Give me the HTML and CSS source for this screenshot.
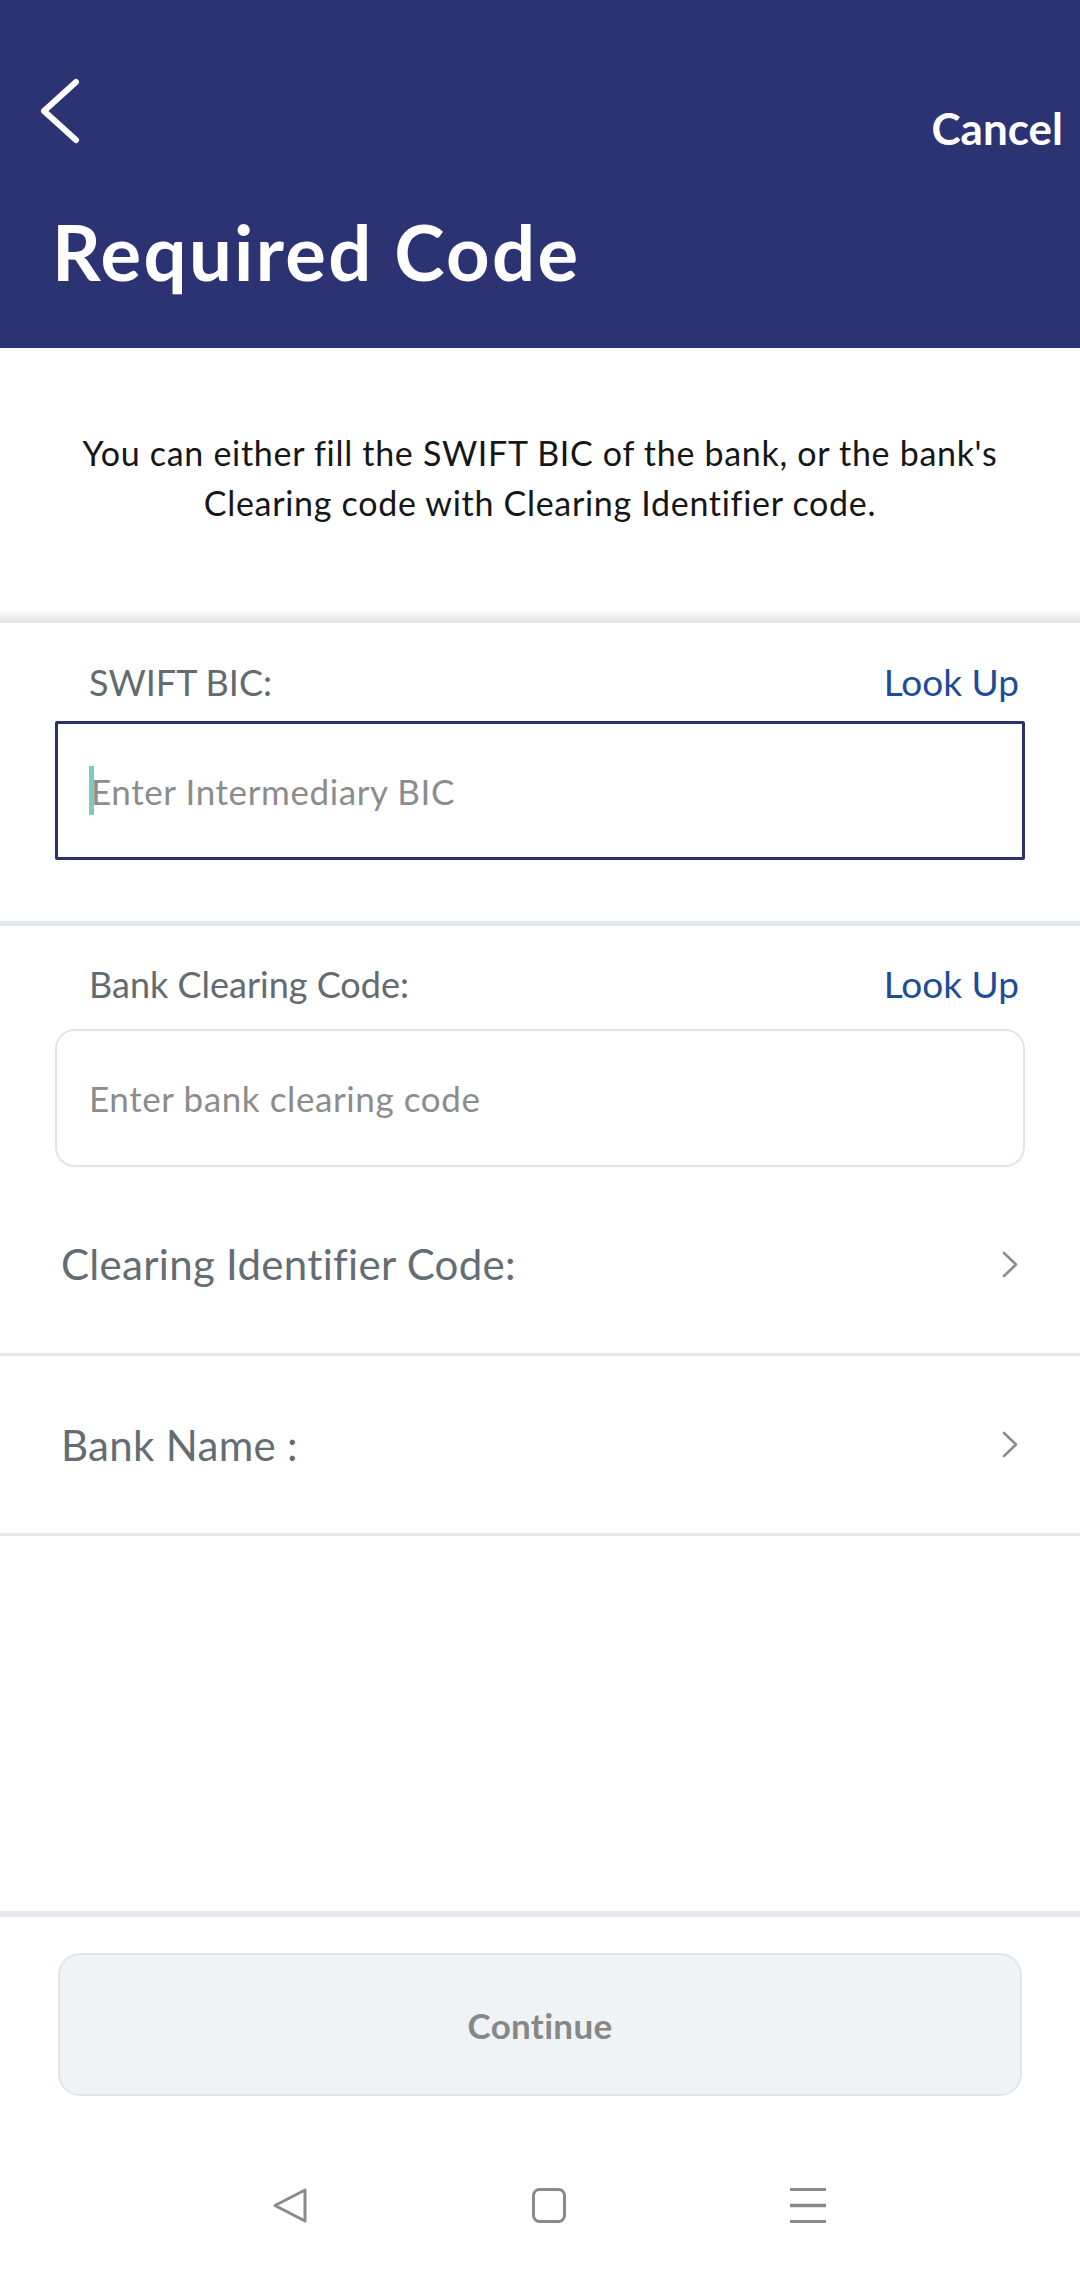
FILE: index.html
```html
<!DOCTYPE html>
<html lang="en">
<head>
<meta charset="utf-8">
<title>Required Code</title>
<link rel="stylesheet" href="styles.css">
</head>
<body>
<div class="screen">
  <header class="header">
    <div class="topbar">
      <svg class="back" viewBox="0 0 40 66" width="40" height="66"><polyline points="36,4 4,33 36,62" fill="none" stroke="#fff" stroke-width="6" stroke-linecap="round" stroke-linejoin="round"/></svg>
      <span class="cancel">Cancel</span>
    </div>
    <h1 class="title">Required Code</h1>
  </header>

  <section class="intro">
    <p>You can either fill the SWIFT BIC of the bank, or the bank's<br>Clearing code with Clearing Identifier code.</p>
  </section>
  <div class="shade"></div>

  <section class="field field-bic">
    <div class="field-head"><span class="label">SWIFT BIC:</span><span class="lookup">Look Up</span></div>
    <div class="input input-focus"><span class="caret"></span><span class="ph">Enter Intermediary BIC</span></div>
  </section>
  <div class="sep"></div>

  <section class="field field-clear">
    <div class="field-head"><span class="label">Bank Clearing Code:</span><span class="lookup">Look Up</span></div>
    <div class="input input-round"><span class="ph">Enter bank clearing code</span></div>
  </section>

  <div class="row row-first">
    <span class="row-text">Clearing Identifier Code:</span>
    <svg class="chev" viewBox="0 0 16 27" width="16" height="27"><polyline points="2,2 14,13.5 2,25" fill="none" stroke="#8d8d8d" stroke-width="2.6" stroke-linecap="round" stroke-linejoin="round"/></svg>
  </div>
  <div class="divider"></div>
  <div class="row">
    <span class="row-text">Bank Name :</span>
    <svg class="chev" viewBox="0 0 16 27" width="16" height="27"><polyline points="2,2 14,13.5 2,25" fill="none" stroke="#8d8d8d" stroke-width="2.6" stroke-linecap="round" stroke-linejoin="round"/></svg>
  </div>
  <div class="divider"></div>

  <div class="spacer"></div>

  <footer class="footer">
    <div class="footer-sep"></div>
    <div class="btn-wrap"><div class="btn">Continue</div></div>
    <nav class="sysnav">
      <svg viewBox="0 0 36 35" width="36" height="35"><polygon points="33,2 3,17.5 33,33" fill="none" stroke="#8a8a8a" stroke-width="3" stroke-linejoin="round"/></svg>
      <svg viewBox="0 0 34 35" width="34" height="35"><rect x="1.5" y="1.5" width="31" height="32" rx="6" fill="none" stroke="#8a8a8a" stroke-width="3"/></svg>
      <svg viewBox="0 0 36 35" width="36" height="35"><line x1="0" y1="1.5" x2="36" y2="1.5" stroke="#8a8a8a" stroke-width="3"/><line x1="0" y1="17.5" x2="36" y2="17.5" stroke="#8a8a8a" stroke-width="3.4"/><line x1="0" y1="33.5" x2="36" y2="33.5" stroke="#8a8a8a" stroke-width="3"/></svg>
    </nav>
  </footer>
</div>
</body>
</html>
```
FILE: styles.css
```css
* { box-sizing: border-box; }
html, body { margin: 0; padding: 0; background: #fff; }
body { font-family: Lato, "Open Sans", sans-serif; }

.screen {
  width: 1080px;
  height: 2274px;
  display: flex;
  flex-direction: column;
  overflow: hidden;
}

/* header */
.header {
  height: 348px;
  flex: none;
  background: #2b3373;
  color: #fff;
}
.topbar {
  display: flex;
  justify-content: space-between;
  align-items: flex-start;
  padding: 78px 17px 0 40px;
}
.back { display: block; }
.cancel {
  margin-top: 24px;
  font-size: 44px;
  line-height: 52px;
  font-weight: 700;
}
.title {
  margin: 53px 0 0;
  padding-left: 52px;
  font-size: 76px;
  line-height: 90px;
  font-weight: 700;
  letter-spacing: 2.3px;
}

/* intro */
.intro {
  flex: none;
  padding: 80px 10px 80px;
}
.intro p {
  margin: 0;
  text-align: center;
  font-size: 34px;
  line-height: 50px;
  letter-spacing: 0.7px;
  color: #161616;
}
.shade {
  flex: none;
  height: 15px;
  background: linear-gradient(to bottom, #ffffff, #e4e4e4);
}

/* fields */
.field { flex: none; }
.field-bic { padding: 37px 0 61px; }
.field-clear { padding: 36px 0 0; }
.field-head {
  height: 44px;
  display: flex;
  justify-content: space-between;
  align-items: baseline;
  padding: 0 61px 0 89px;
}
.label {
  font-size: 36px;
  line-height: 44px;
  color: #636b71;
}
.lookup {
  font-size: 37px;
  line-height: 44px;
  color: #1d4c9b;
}
.input {
  margin: 17px 55px 0;
  height: 139px;
  display: flex;
  align-items: center;
  padding-left: 31px;
}
.input-focus {
  border: 3px solid #2c3270;
  border-radius: 2px;
}
.field-clear .input { margin-top: 23px; height: 138px; padding-left: 32px; }
.input-round {
  border: 2px solid #e1e5eb;
  border-radius: 20px;
}
.caret {
  display: inline-block;
  width: 5px;
  height: 49px;
  margin-right: -3px;
  background: #7fcabd;
}
.ph {
  font-size: 35px;
  line-height: 42px;
  letter-spacing: 0.6px;
  color: #8c8c8c;
}
.sep {
  flex: none;
  height: 5px;
  background: #e3e8ee;
}

/* rows */
.row {
  flex: none;
  height: 177px;
  display: flex;
  align-items: center;
  justify-content: space-between;
  padding: 0 62px 0 61px;
}
.row-first { margin-top: 8px; height: 178px; }
.row-text {
  font-size: 42px;
  line-height: 50px;
  letter-spacing: 0.3px;
  color: #646d73;
}
.chev { display: block; }
.divider {
  flex: none;
  height: 3px;
  background: #e4e7ee;
}

.spacer { flex: 1; }

/* footer */
.footer { flex: none; }
.footer-sep { height: 6px; background: #e4e8ee; }
.btn-wrap { padding: 36px 58px 0; }
.btn {
  height: 143px;
  border: 2px solid #e1e5ea;
  border-radius: 22px;
  background: #f0f3f6;
  display: flex;
  align-items: center;
  justify-content: center;
  font-size: 35px;
  font-weight: 700;
  letter-spacing: 0.3px;
  color: #878787;
}
.sysnav {
  display: flex;
  align-items: center;
  gap: 224px;
  padding: 92px 0 51px 272px;
}
.sysnav svg { display: block; }
```
